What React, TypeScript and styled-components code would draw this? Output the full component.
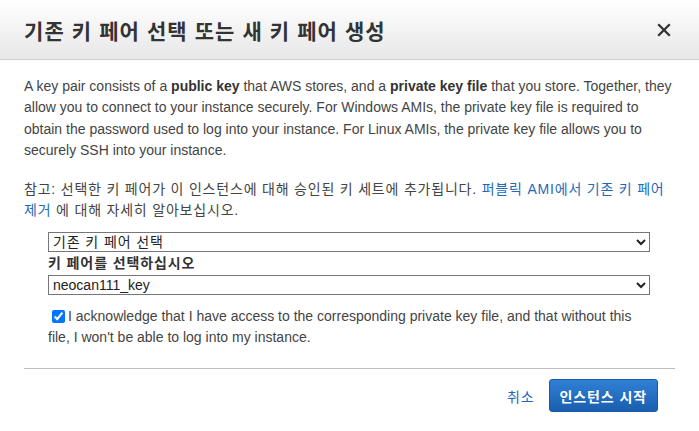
import styled, { createGlobalStyle } from "styled-components";

const GlobalStyle = createGlobalStyle`
  html, body {
    margin: 0;
    padding: 0;
    background: #fff;
  }
  body {
    font-family: "Liberation Sans", "Noto Sans CJK KR", sans-serif;
  }
`;

const DialogS = styled.div`
  width: 699px;
  height: 431px;
  background: #fff;
  color: #444;
  font-size: 14px;
`;

const HeaderS = styled.header`
  height: 59px;
  display: flex;
  align-items: center;
  justify-content: space-between;
  padding: 0 28px 0 24px;
  background: linear-gradient(#ffffff, #e7e7e7);
  border-bottom: 1px solid #cdcdcd;
`;

const TitleS = styled.h2`
  margin: 0;
  font-size: 21px;
  font-weight: 700;
  color: #333;
  letter-spacing: 1.1px;
`;

const CloseS = styled.button`
  width: 14px;
  height: 14px;
  padding: 0;
  border: 0;
  background: none;
  cursor: pointer;
  display: flex;

  & svg {
    display: block;
  }
`;

const BodyS = styled.div`
  padding: 16px 24px 0;
`;

const ParagraphS = styled.p<{ $gap: number; $korean?: boolean }>`
  margin: 0 0 ${(props) => props.$gap}px;
  line-height: 21.4px;
  letter-spacing: ${(props) => (props.$korean ? "0.8px" : "0")};

  & b {
    color: #333;
  }
`;

const LinkS = styled.a`
  color: #1f69b8;
  text-decoration: none;
`;

const FieldsS = styled.div`
  padding-left: 24px;
  width: 602px;
`;

const SelectS = styled.select<{ $korean?: boolean }>`
  display: block;
  width: 602px;
  height: 20px;
  margin: 0;
  font-family: "Liberation Sans", "Noto Sans CJK KR", sans-serif;
  font-size: 14px;
  letter-spacing: ${(props) => (props.$korean ? "0.9px" : "0")};
  color: #222;
  background: #fff;
`;

const FieldLabelS = styled.label`
  display: block;
  font-weight: 700;
  color: #333;
  line-height: 23px;
  letter-spacing: 0.9px;
`;

const AckS = styled.label`
  display: block;
  margin-top: 11px;
  line-height: 21px;
  color: #444;

  & input {
    margin: 3px 3px 3px 4px;
    vertical-align: -2px;
  }
`;

const DividerS = styled.hr`
  margin: 20px 0 0;
  border: 0;
  border-top: 1px solid #bdbdbd;
`;

const FooterS = styled.div`
  display: flex;
  justify-content: flex-end;
  align-items: center;
  gap: 14px;
  padding: 10px 17px 0 0;
`;

const CancelS = styled.a`
  color: #1f69b8;
  font-size: 14px;
  letter-spacing: 0.9px;
  text-decoration: none;
`;

const PrimaryButtonS = styled.button`
  height: 33px;
  padding: 0 10px;
  border: 1px solid #1b5aa6;
  border-radius: 3px;
  background: linear-gradient(#2f80d6, #1a5eae);
  color: #fff;
  font-family: "Liberation Sans", "Noto Sans CJK KR", sans-serif;
  font-size: 14px;
  font-weight: 700;
  letter-spacing: 0.9px;
  cursor: pointer;
`;

const CloseIcon = () => (
  <svg width="14" height="14" viewBox="0 0 14 14">
    <path
      d="M1.2 1.2 L12.8 12.8 M12.8 1.2 L1.2 12.8"
      stroke="#333"
      strokeWidth="2.3"
      fill="none"
    />
  </svg>
);

export default function App() {
  return (
    <>
      <GlobalStyle />
      <DialogS>
        <HeaderS>
          <TitleS>기존 키 페어 선택 또는 새 키 페어 생성</TitleS>
          <CloseS aria-label="닫기">
            <CloseIcon />
          </CloseS>
        </HeaderS>

        <BodyS>
          <ParagraphS $gap={17}>
            A key pair consists of a <b>public key</b> that AWS stores, and a{" "}
            <b>private key file</b> that you store. Together, they allow you to
            connect to your instance securely. For Windows AMIs, the private
            key file is required to obtain the password used to log into your
            instance. For Linux AMIs, the private key file allows you to
            securely SSH into your instance.
          </ParagraphS>

          <ParagraphS $gap={11} $korean>
            참고: 선택한 키 페어가 이 인스턴스에 대해 승인된 키 세트에
            추가됩니다. <LinkS href="#">퍼블릭 AMI에서 기존 키 페어 제거</LinkS>{" "}
            에 대해 자세히 알아보십시오.
          </ParagraphS>

          <FieldsS>
            <SelectS $korean defaultValue="existing">
              <option value="existing">기존 키 페어 선택</option>
              <option value="new">새 키 페어 생성</option>
            </SelectS>
            <FieldLabelS>키 페어를 선택하십시오</FieldLabelS>
            <SelectS defaultValue="neocan111_key">
              <option value="neocan111_key">neocan111_key</option>
            </SelectS>
            <AckS>
              <input type="checkbox" defaultChecked />I acknowledge that I have
              access to the corresponding private key file, and that without
              this file, I won't be able to log into my instance.
            </AckS>
          </FieldsS>

          <DividerS />

          <FooterS>
            <CancelS href="#">취소</CancelS>
            <PrimaryButtonS>인스턴스 시작</PrimaryButtonS>
          </FooterS>
        </BodyS>
      </DialogS>
    </>
  );
}
